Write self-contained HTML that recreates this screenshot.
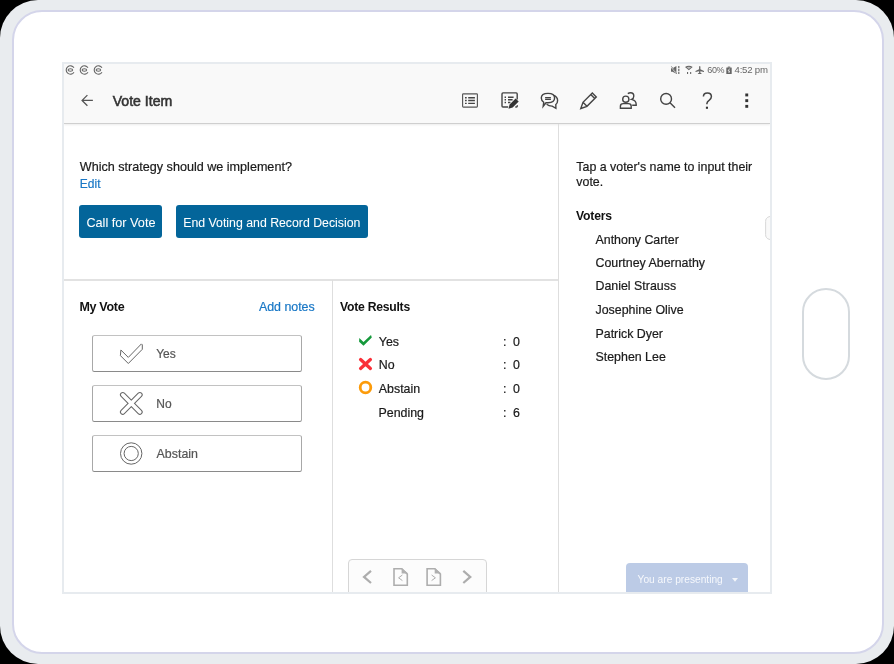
<!DOCTYPE html>
<html><head><meta charset="utf-8">
<style>
html,body{margin:0;padding:0;}
body{-webkit-font-smoothing:antialiased;width:894px;height:664px;position:relative;overflow:hidden;background:#000;font-family:"Liberation Sans",sans-serif;}
.a{position:absolute;white-space:nowrap;line-height:1;}
#dev{position:absolute;left:0;top:0;width:894px;height:664px;background:#e9ecef;border-radius:38px;}
#inner{position:absolute;left:12px;top:10px;width:868px;height:640px;background:#fff;border:2px solid #d4d5ea;border-radius:30px;}
#screen{will-change:transform;position:absolute;left:62px;top:62px;width:706px;height:528px;border:2px solid #e7ebef;background:#fff;overflow:hidden;}
#bar{position:absolute;left:0;top:0;width:706px;height:59px;background:#f9f9f9;border-bottom:1.2px solid #cfcfcf;box-shadow:0 1px 2px rgba(0,0,0,0.08);}
.t{font-size:12.4px;color:#1a1a1a;-webkit-text-stroke:0.2px currentColor;}
.b{font-size:11.8px;font-weight:bold;color:#111;}
.vb{position:absolute;left:28px;width:208px;height:34.5px;border:1px solid #a8a8a8;border-top-color:#c2c2c2;border-bottom-color:#8a8a8a;border-radius:2.5px;background:#fff;}
</style></head><body>
<div id="dev"></div>
<div id="inner"></div>
<!-- home button -->
<div class="a" style="left:802px;top:288px;width:44px;height:88px;border:2px solid #d5dade;border-radius:24px;"></div>

<div id="screen">
  <div id="bar">
    <!-- status icons -->
    <svg class="a" style="left:0;top:0" width="706" height="59" viewBox="64 64 706 59">
      <g fill="none" stroke="#666" stroke-width="1.1"><path d="M73.96 67.77 A4.2 4.2 0 1 0 73.96 72.23"/><ellipse cx="70.40" cy="70" rx="2.3" ry="1.2"/><path d="M87.96 67.77 A4.2 4.2 0 1 0 87.96 72.23"/><ellipse cx="84.40" cy="70" rx="2.3" ry="1.2"/><path d="M101.96 67.77 A4.2 4.2 0 1 0 101.96 72.23"/><ellipse cx="98.40" cy="70" rx="2.3" ry="1.2"/></g>
      <g fill="#666">
        <path d="M671 68.3 h1.6 l3.8 -2.4 v8.2 l-3.8 -2.4 h-1.6z"/>
        <path d="M671 66.2 l5.6 7.8" stroke="#f9f9f9" stroke-width="1.2"/>
        <path d="M671.4 66.4 l5.4 7.5" stroke="#666" stroke-width="0.8"/>
        <rect x="678.2" y="66" width="1.2" height="2.2"/><rect x="678.2" y="68.9" width="1.2" height="2.4"/><rect x="678.2" y="72" width="1.2" height="2"/>
        <path d="M685 67.1 Q688.85 64.3 692.7 67.1 L688.85 70.2 Z"/>
        <path d="M686.6 67.4 Q688.85 66.2 691.1 67.4 L688.85 69 Z" fill="#bdbdbd"/>
        <rect x="687" y="72" width="1.1" height="2"/><rect x="690.1" y="72" width="1.1" height="2"/>
        <path d="M699.1 66.6 Q699.75 65.6 700.4 66.6 V69.3 L704 71 V72 L700.4 71.2 V72.8 L701.6 73.5 V74 H697.9 V73.5 L699.1 72.8 V71.2 L695.5 72 V71 L699.1 69.3 Z"/>
        <rect x="726.3" y="67.4" width="5.4" height="6.7" rx="0.4"/><rect x="727.8" y="66.6" width="2.4" height="1"/>
      </g>
      <path d="M729.6 68.6 l-1.6 2.4 h1.6 l-0.8 2" stroke="#f8f8f8" stroke-width="0.8" fill="none"/>
    </svg>
    <div class="a" style="left:643.3px;top:1.6px;font-size:9px;letter-spacing:-0.35px;color:#666;">60%</div>
    <div class="a" style="left:670.5px;top:1.3px;font-size:9.6px;letter-spacing:-0.2px;color:#666;">4:52 pm</div>

    <!-- toolbar -->
    <svg class="a" style="left:0;top:0" width="706" height="59" viewBox="64 64 706 59">
      <path d="M92.9 100.4 H82.2 M87.4 95.1 L82.1 100.4 L87.4 105.7" fill="none" stroke="#555" stroke-width="1.3"/>
      <g fill="none" stroke="#444" stroke-width="1.4">
        <!-- list -->
        <rect x="462.6" y="93.8" width="14.8" height="13.3" rx="0.8" stroke-width="1.15" stroke="#555"/>
        <path d="M465 97.7h1.7M468.2 97.7h6.7M465 100.5h1.7M468.2 100.5h6.7M465 103.4h1.7M468.2 103.4h6.7"/>
        <!-- edit list -->
        <path d="M508.2 107 H503 Q502 107 502 106 V93.9 Q502 92.9 503 92.9 H516.2 Q517.2 92.9 517.2 93.9 V99.4"/><path d="M515.3 107 H516.3 Q517.3 107 517.3 106 V105.2"/>
        <path d="M504.6 97.2h1.4M508 97.2h5.6M504.6 99.8h1.4M508 99.8h4.6M504.6 102.5h1.4M508 102.5h2.4"/>
        <!-- chat -->
        <path d="M543.7 102.3 Q541.3 100.6 541.3 98.1 Q541.3 93.4 548 93.4 Q554.6 93.4 554.6 98.1 Q554.6 102.8 548 102.8 Q546.9 102.8 546 102.7 L543.2 106.3 Z"/>
        <path d="M553.4 95.1 Q557.6 96.8 557.6 100.4 Q557.6 103 555.8 104.5 L555.9 108.3 L552.2 106.1 Q549 106.2 546.6 104.3"/>
        <path d="M545.1 97.6h5.8M545.1 99.4h5.8"/>
        <!-- pencil -->
        <g transform="translate(587.8,101.5) rotate(-45)">
          <path d="M-9.9 0 L-4 -2.8 H9.2 V2.8 H-4 Z M-4 -2.8 V2.8 M7 -2.8 V2.8"/>
        </g>
        <!-- people -->
        <circle cx="625.8" cy="99.2" r="3.1"/>
        <path d="M620.4 108.2 V106.2 Q620.4 103.6 623.2 103.6 H628.4 Q631.2 103.6 631.2 106.2 V108.2 Z"/>
        <path d="M627.8 93.6 Q629 92.8 630.6 92.8 Q633.8 92.8 633.8 96 Q633.8 98.6 631.6 99.4 Q636.2 100.6 636.2 104.4 V105.2 H632.2"/>
        <!-- search -->
        <circle cx="666.1" cy="98.9" r="5.4"/>
        <path d="M670 102.8 L675 107.8"/>
        <!-- help -->
        <path d="M703.4 96.6 Q703.4 92.9 707.4 92.9 Q711.4 92.9 711.4 96.6 Q711.4 98.6 709.3 100.2 Q706.9 101.9 706.9 103.4 V104.2" stroke-width="1.5"/>
      </g>
      <g fill="#333">
        <path d="M508.5 108.8 L509.6 104.5 L515.6 98.5 L518.7 101.6 L512.7 107.6 Z"/>
        <rect x="705.9" y="106.7" width="2.1" height="2.1"/>
        <rect x="745.3" y="93.5" width="2.9" height="2.9"/>
        <rect x="745.3" y="99.2" width="2.9" height="2.9"/>
        <rect x="745.3" y="104.9" width="2.9" height="2.9"/>
      </g>
    </svg>
    <div class="a" style="left:48.7px;top:30.3px;font-size:14.1px;font-weight:normal;-webkit-text-stroke:0.55px #333;color:#333;">Vote Item</div>
  </div>

  <!-- dividers -->
  <div class="a" style="left:494px;top:60px;width:1px;height:470px;background:#dedede;"></div>
  <div class="a" style="left:0;top:215px;width:494px;height:1.5px;background:#e2e2e2;"></div>
  <div class="a" style="left:268px;top:216px;width:1px;height:314px;background:#dedede;"></div>

  <!-- question -->
  <div class="a t" style="left:15.8px;top:97.2px;font-size:12.6px;">Which strategy should we implement?</div>
  <div class="a t" style="left:15.8px;top:113.8px;font-size:12px;color:#1877c6;">Edit</div>
  <div class="a" style="left:15px;top:141px;width:83.2px;height:33.4px;background:#03659a;border-radius:3px;"></div>
  <div class="a t" style="left:22.4px;top:152.9px;font-size:12.7px;color:#fff;-webkit-text-stroke:0.05px #fff;">Call for Vote</div>
  <div class="a" style="left:111.8px;top:141px;width:192px;height:33.4px;background:#03659a;border-radius:3px;"></div>
  <div class="a" style="left:119.3px;top:152.9px;font-size:12.3px;color:#fff;-webkit-text-stroke:0.05px #fff;">End Voting and Record Decision</div>

  <!-- my vote -->
  <div class="a b" style="left:15.4px;top:236.6px;font-size:12.5px;letter-spacing:-0.3px;">My Vote</div>
  <div class="a t" style="left:194.9px;top:236.9px;color:#1877c6;">Add notes</div>
  <div class="vb" style="top:271.1px;"></div>
  <div class="vb" style="top:321.3px;"></div>
  <div class="vb" style="top:371.4px;"></div>
  <div class="a t" style="left:92.2px;top:284.1px;color:#555;font-size:12px;">Yes</div>
  <div class="a t" style="left:92.3px;top:334.1px;color:#555;font-size:12px;">No</div>
  <div class="a t" style="left:92.6px;top:384px;color:#555;">Abstain</div>
  <svg class="a" style="left:0;top:0" width="706" height="528" viewBox="64 64 706 528">
    <path d="M120.9 350 L128.3 357.4 L141.4 343.9 L142.3 344.8 L142.3 349.3 L128.3 363.5 L120.4 355.6 Z" fill="none" stroke="#666" stroke-width="1"/>
    <g stroke-linecap="round" fill="none">
      <path d="M122.75 394.85 L139.85 411.95 M139.85 394.85 L122.75 411.95" stroke="#666" stroke-width="5.6"/>
      <path d="M122.75 394.85 L139.85 411.95 M139.85 394.85 L122.75 411.95" stroke="#fff" stroke-width="3.6"/>
    </g>
    <circle cx="131.2" cy="453.5" r="10.7" fill="none" stroke="#666" stroke-width="1"/>
    <circle cx="131.2" cy="453.5" r="7.1" fill="none" stroke="#666" stroke-width="1"/>

    <!-- results icons -->
    <path d="M359.3 338 L363.5 342 L371 335 L371.8 337.6 L363.5 345.8 L359.1 341.8 Z" fill="#15993b"/>
    <path d="M360.6 359.6 L370.4 368.4 M370.4 359.6 L360.6 368.4" stroke="#fa2f38" stroke-width="3.3" stroke-linecap="round"/>
    <circle cx="365.5" cy="387.5" r="5.3" fill="none" stroke="#fc9b0a" stroke-width="2.8"/>

  </svg>

  <!-- vote results -->
  <div class="a b" style="left:276px;top:237px;font-size:12.2px;letter-spacing:-0.25px;">Vote Results</div>
  <div class="a t" style="left:314.8px;top:272.2px;">Yes</div>
  <div class="a t" style="left:314.8px;top:295.3px;">No</div>
  <div class="a t" style="left:314.8px;top:319.1px;">Abstain</div>
  <div class="a t" style="left:314.5px;top:342.8px;">Pending</div>
  <div class="a t" style="left:449px;top:272.2px;">0</div>
  <div class="a t" style="left:449px;top:295.3px;">0</div>
  <div class="a t" style="left:449px;top:319.1px;">0</div>
  <div class="a t" style="left:449px;top:342.8px;">6</div>

  <div class="a t" style="left:439px;top:272.2px;">:</div>
  <div class="a t" style="left:439px;top:295.3px;">:</div>
  <div class="a t" style="left:439px;top:319.1px;">:</div>
  <div class="a t" style="left:439px;top:342.8px;">:</div>
  <!-- nav widget -->
  <div class="a" style="left:283.5px;top:494.6px;width:137px;height:40px;border:1.5px solid #d6d6d6;border-radius:4px;background:#fcfcfc;"></div>
  <svg class="a" style="left:0;top:0" width="706" height="528" viewBox="64 64 706 528">
    <g fill="none" stroke="#adadad" stroke-width="2.2">
      <path d="M371 570.8 L364 576.9 L371 583"/>
      <path d="M463.3 570.8 L470.3 576.9 L463.3 583"/>
      <path d="M401.8 568.7 H394 V585.2 H407.3 V574.2 Z" stroke-width="1.6"/>
      <path d="M434.9 568.7 H427.1 V585.2 H440.4 V574.2 Z" stroke-width="1.6"/>
      <path d="M402.4 575 L398.6 577.8 L402.4 580.6" stroke-width="1"/>
      <path d="M431.6 575 L435.4 577.8 L431.6 580.6" stroke-width="1"/>
    </g>
    <path d="M401.6 568 L408.1 573.5 L401.6 573.5 Z" fill="#b0b0b0"/>
    <path d="M434.7 568 L441.2 573.5 L434.7 573.5 Z" fill="#b0b0b0"/>
  </svg>

  <!-- right panel -->
  <div class="a t" style="left:512.3px;top:97.3px;">Tap a voter's name to input their</div>
  <div class="a t" style="left:512.3px;top:111.9px;">vote.</div>
  <div class="a b" style="left:512px;top:146px;font-size:12.2px;letter-spacing:-0.2px;">Voters</div>
  <div class="a t" style="left:531.5px;top:169.6px;">Anthony Carter</div>
  <div class="a t" style="left:531.5px;top:192.5px;">Courtney Abernathy</div>
  <div class="a t" style="left:531.5px;top:216.4px;">Daniel Strauss</div>
  <div class="a t" style="left:531.5px;top:240.1px;">Josephine Olive</div>
  <div class="a t" style="left:531.5px;top:263.6px;">Patrick Dyer</div>
  <div class="a t" style="left:531.5px;top:287.2px;">Stephen Lee</div>
  <svg class="a" style="left:699px;top:150px" width="8" height="28" viewBox="763 214 8 28"><path d="M770.5 216.3 Q767.2 216.8 766.2 218.8 Q765.6 219.8 765.6 221.5 V234.5 Q765.6 236.2 766.2 237.2 Q767.2 239.2 770.5 239.7 Z" fill="#f9f9f9" stroke="#d4d4d4" stroke-width="0.9"/></svg>

  <!-- presenting -->
  <div class="a" style="left:562.2px;top:499.3px;width:122.2px;height:34px;background:#bccbe6;border-radius:4px;"></div>
  <div class="a" style="left:573.6px;top:511.2px;font-size:10.2px;color:#f6f8fc;">You are presenting</div>
  <svg class="a" style="left:667.7px;top:513.6px" width="6" height="4" viewBox="0 0 6 4"><path d="M0 0 H6 L3 3.8 Z" fill="#f2f5fa"/></svg>
</div>
</body></html>
